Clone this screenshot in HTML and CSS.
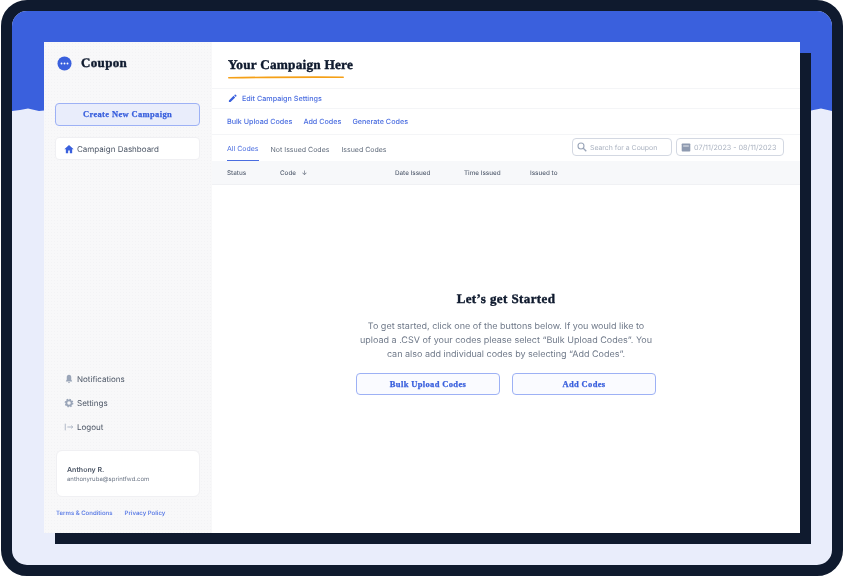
FILE: index.html
```html
<!DOCTYPE html>
<html lang="en">
<head>
<meta charset="utf-8">
<title>Coupon</title>
<link rel="stylesheet" href="styles.css">
</head>
<body>
<div class="frame">
  <svg class="wave" viewBox="0 0 820 100" preserveAspectRatio="none" aria-hidden="true">
    <path d="M0 0H820V100L809 97.500 799 99.500H32L27 100 16 97.500 8 99 0 100Z" fill="#3a60dd"/>
  </svg>
  <div class="app">
    <aside class="sidebar">
      <div class="brand">
        <svg class="brand-mark" viewBox="0 0 16 16"><circle cx="8" cy="8" r="7.5" fill="#3a60dd"/><circle cx="4.8" cy="8" r="1" fill="#fff"/><circle cx="8" cy="8" r="1" fill="#fff"/><circle cx="11.2" cy="8" r="1" fill="#fff"/></svg>
        <span class="brand-name">Coupon</span>
      </div>
      <button class="btn-create">Create New Campaign</button>
      <div class="nav-card">
        <svg class="ico" viewBox="0 0 12 12"><path d="M6 1.2 .4 6.400H2.200V11H5V7.800H7V11H9.800V6.400H11.600Z" fill="#3a60dd"/></svg>
        <span>Campaign Dashboard</span>
      </div>
      <nav class="nav-low">
        <div class="nav-item">
          <svg class="ico" viewBox="0 0 12 12"><path d="M6 1C4.200 1 3.300 2.300 3.300 4V6.800L2.300 8.300V9H9.700V8.300L8.700 6.800V4C8.700 2.300 7.800 1 6 1ZM4.900 9.600C5 10.500 5.400 11 6 11S7 10.500 7.100 9.600Z" fill="#9aa5b8"/></svg>
          <span>Notifications</span>
        </div>
        <div class="nav-item">
          <svg class="ico" viewBox="0 0 12 12"><circle cx="6" cy="6" r="3.200" fill="none" stroke="#9aa5b8" stroke-width="2.200"/><circle cx="6" cy="6" r="4.500" fill="none" stroke="#9aa5b8" stroke-width="1.500" stroke-dasharray="1.800 1.730"/></svg>
          <span>Settings</span>
        </div>
        <div class="nav-item">
          <svg class="ico" viewBox="0 0 12 12"><path d="M1.500 2V10M4 6H10.500M8.700 4.300 10.500 6 8.700 7.700" fill="none" stroke="#9aa5b8" stroke-width=".9"/></svg>
          <span>Logout</span>
        </div>
      </nav>
      <div class="user-card">
        <div class="user-name">Anthony R.</div>
        <div class="user-mail">anthonyruba@sprintfwd.com</div>
      </div>
      <div class="legal"><a>Terms &amp; Conditions</a><a>Privacy Policy</a></div>
    </aside>
    <main class="main">
      <header class="head">
        <h1 class="title">Your Campaign Here</h1>
        <svg class="underline" viewBox="0 0 116 3" aria-hidden="true"><path d="M.8 1.800C40 1.100 80 1.100 115.200 1.200" fill="none" stroke="#f5a017" stroke-width="1.600" stroke-linecap="round"/></svg>
      </header>
      <div class="row row-edit">
        <svg class="ico-edit" viewBox="0 0 10 10"><path d="M1 7.200V9H2.800L8 3.800 6.200 2ZM6.800 1.400 8.600 3.200 9.300 2.500C9.600 2.200 9.600 1.800 9.300 1.500L8.500.7C8.200.4 7.800.4 7.500.7Z" fill="#3a60dd"/></svg>
        <span>Edit Campaign Settings</span>
      </div>
      <div class="row row-actions"><a>Bulk Upload Codes</a><a>Add Codes</a><a>Generate Codes</a></div>
      <div class="row row-tabs">
        <a class="tab tab-on">All Codes</a><a class="tab">Not Issued Codes</a><a class="tab">Issued Codes</a>
        <div class="tools">
          <div class="field field-search">
            <svg class="field-ico" viewBox="0 0 10 10"><circle cx="4" cy="4" r="3" fill="none" stroke="#9aa5b8" stroke-width="1.100"/><path d="M6.300 6.300 9.300 9.300" stroke="#9aa5b8" stroke-width="1.300"/></svg>
            <span>Search for a Coupon</span>
          </div>
          <div class="field field-date">
            <svg class="field-ico" viewBox="0 0 10 10"><path d="M1.500 1.500H8.500Q9.300 1.500 9.300 2.300V8.700Q9.300 9.500 8.500 9.500H1.500Q.7 9.500 .7 8.700V2.300Q.7 1.500 1.500 1.500Z" fill="#8e9ab0"/><path d="M2.200 4H7.800" stroke="#fff" stroke-width=".8"/></svg>
            <span>07/11/2023 - 08/11/2023</span>
          </div>
        </div>
      </div>
      <div class="thead">
        <span>Status</span>
        <span class="th-code">Code <i class="arrow">↓</i></span>
        <span>Date Issued</span>
        <span>Time Issued</span>
        <span>Issued to</span>
      </div>
      <section class="empty">
        <h2 class="empty-title">Let’s get Started</h2>
        <p class="empty-text">To get started, click one of the buttons below. If you would like to upload a .CSV of your codes please select “Bulk Upload Codes”. You can also add individual codes by selecting “Add Codes”.</p>
        <div class="empty-btns"><button class="btn-outline">Bulk Upload Codes</button><button class="btn-outline">Add Codes</button></div>
      </section>
    </main>
  </div>
</div>
</body>
</html>
```
FILE: styles.css
```css
* { box-sizing: border-box; }
html, body { margin: 0; height: 100%; background: #fff; }
body { font-family: Inter, "Liberation Sans", sans-serif; color: #4b5565; overflow: hidden; text-rendering: geometricPrecision; }
.frame {
  position: relative; width: 842px; height: 576px; margin-left: 1px;
  background: #e9edfb; border: 11px solid #0f1a2e; border-radius: 26px;
  padding: 31px 0 0 32px; overflow: hidden; filter: blur(.3px);
}
.wave { position: absolute; left: 0; top: 0; width: 820px; height: 100px; }
.app {
  position: relative; display: flex; width: 756px; height: 491px;
  background: #fff; box-shadow: 11px 11px 0 #0f1a2e;
}
.sidebar {
  width: 168px; flex: none; display: flex; flex-direction: column; padding: 0 12px 0 11px;
  background-color: #f8f8f9;
  background-image: radial-gradient(#f3f3f5 .6px, transparent .7px);
  background-size: 3px 3px;
}
.brand { display: flex; align-items: center; gap: 9px; height: 16px; margin-top: 13px; margin-left: 2px; }
.brand-mark { width: 15px; height: 15px; }
.brand-name { font: 700 13px "Liberation Serif", serif; letter-spacing: .35px; -webkit-text-stroke: .4px #0f1a2e; color: #0f1a2e; }
.btn-create {
  margin-top: 32px; height: 23px; padding: 0 0 1px; border: 1px solid #9db1f5; border-radius: 4px; background: #e9edfb;
  font: 700 8.500px "Liberation Serif", serif; letter-spacing: .35px; -webkit-text-stroke: .25px #3a60dd; color: #3a60dd;
}
.nav-card {
  margin-top: 11px; height: 23px; background: #fff; border-radius: 4px; border: 1px solid #f0f0f3;
  display: flex; align-items: center; gap: 3px; padding-left: 8px; font-size: 8px; color: #4b5565;
}
.ico { width: 10px; height: 10px; flex: none; }
.nav-low { margin-top: auto; display: flex; flex-direction: column; gap: 9px; }
.nav-item { height: 15px; display: flex; align-items: center; gap: 3px; padding-left: 9px; font-size: 8px; color: #4b5565; }
.user-card {
  margin-top: 16px; margin-left: 1px; height: 47px; background: #fff; border: 1px solid #f0f0f3; border-radius: 6px;
  padding: 14px 0 0 10px;
}
.user-name { font-size: 7px; font-weight: 600; color: #4b5565; line-height: 10px; }
.user-mail { font-size: 6px; color: #6b7585; line-height: 10px; }
.legal { display: flex; gap: 12px; margin: 12px 0 14px 1px; font-size: 6px; font-weight: 600; color: #5f7fe6; line-height: 10px; }
.main { flex: 1; display: flex; flex-direction: column; min-width: 0; }
.head { height: 47px; padding: 15px 0 0 16px; border-bottom: 1px solid #f4f5f7; }
.title { margin: 0; font: 700 13.300px/16px "Liberation Serif", serif; letter-spacing: .2px; -webkit-text-stroke: .4px #0f1a2e; color: #0f1a2e; }
.underline { display: block; width: 116px; height: 3px; margin-top: 3px; }
.row { display: flex; align-items: center; padding-left: 15px; border-bottom: 1px solid #f4f5f7; font-size: 7.200px; font-weight: 500; color: #4a6de0; }
.row-edit { height: 20px; gap: 5px; padding-left: 16px; }
.ico-edit { width: 9px; height: 9px; }
.row-actions { height: 26px; gap: 11px; }
.row-tabs { height: 26px; border-bottom: 0; font-size: 7px; font-weight: 400; color: #5f6a7a; align-items: stretch; }
.tab { display: flex; align-items: center; margin-right: 12px; padding-top: 2px; }
.tab-on { color: #4a6de0; border-bottom: 1px solid #4a6de0; }
.tools { margin-left: auto; margin-right: 16px; display: flex; gap: 4px; align-items: center; padding-bottom: 2px; }
.field {
  height: 18px; display: flex; align-items: center; gap: 3px; padding-left: 4px; white-space: nowrap;
  border: 1px solid #d3d8e2; border-radius: 4px; font-size: 6.900px; color: #aab2c0;
}
.field-search { width: 100px; }
.field-date { width: 108px; font-size: 7.200px; }
.field-ico { width: 10px; height: 10px; flex: none; }
.thead {
  height: 24px; display: grid; grid-template-columns: 53px 115px 69px 66px 1fr; align-items: center; padding: 1px 0 0 15px;
  background: #f7f8fa; border-bottom: 1px solid #f0f1f4; font-size: 6.300px; font-weight: 500; color: #5a6475;
}
.arrow { font-style: normal; margin-left: 4px; }
.empty { flex: 1; display: flex; flex-direction: column; align-items: center; padding-top: 106px; }
.empty-title { margin: 0; font: 700 13px/16px "Liberation Serif", serif; letter-spacing: .4px; -webkit-text-stroke: .4px #0f1a2e; color: #0f1a2e; }
.empty-text { margin: 13px 0 0; width: 300px; text-align: center; font-size: 9px; line-height: 14px; color: #6f7989; }
.empty-btns { display: flex; gap: 12px; margin-top: 11px; }
.btn-outline {
  width: 144px; height: 22px; padding: 0; background: #fafbff; border: 1px solid #9db1f5; border-radius: 4px;
  font: 700 8.500px "Liberation Serif", serif; letter-spacing: .35px; -webkit-text-stroke: .25px #3a60dd; color: #3a60dd;
}
```
